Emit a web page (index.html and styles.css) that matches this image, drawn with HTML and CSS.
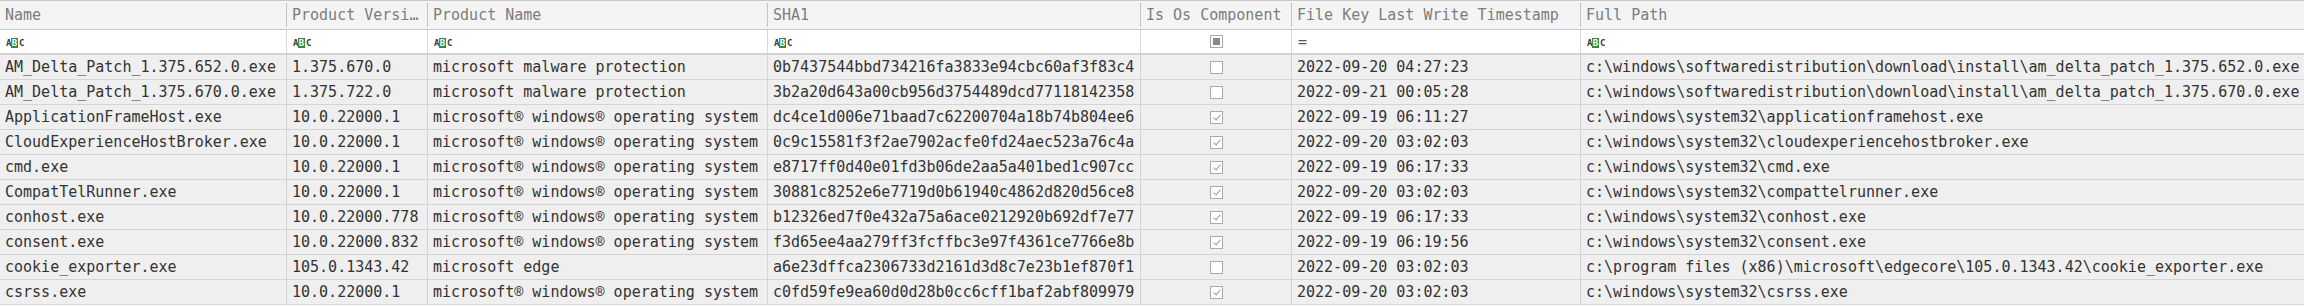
FILE: index.html
```html
<!DOCTYPE html>
<html>
<head>
<meta charset="utf-8">
<link rel="stylesheet" href="styles.css">
</head>
<body>
<div class="grid">
  <div class="row head">
    <div class="cell"><span class="ht">Name</span></div>
    <div class="cell"><span class="ht">Product Versi…</span></div>
    <div class="cell"><span class="ht">Product Name</span></div>
    <div class="cell"><span class="ht">SHA1</span></div>
    <div class="cell"><span class="ht">Is Os Component</span></div>
    <div class="cell"><span class="ht">File Key Last Write Timestamp</span></div>
    <div class="cell last"><span class="ht">Full Path</span></div>
  </div>
  <div class="row filter">
    <div class="cell"><span class="abc"><i>A</i><b>B</b><i>C</i></span></div>
    <div class="cell"><span class="abc"><i>A</i><b>B</b><i>C</i></span></div>
    <div class="cell"><span class="abc"><i>A</i><b>B</b><i>C</i></span></div>
    <div class="cell"><span class="abc"><i>A</i><b>B</b><i>C</i></span></div>
    <div class="cell center"><span class="cb ind"></span></div>
    <div class="cell"><span class="eq">=</span></div>
    <div class="cell last"><span class="abc"><i>A</i><b>B</b><i>C</i></span></div>
  </div>
  <div class="row data">
    <div class="cell">AM_Delta_Patch_1.375.652.0.exe</div>
    <div class="cell">1.375.670.0</div>
    <div class="cell">microsoft malware protection</div>
    <div class="cell">0b7437544bbd734216fa3833e94cbc60af3f83c4</div>
    <div class="cell center"><span class="cb"></span></div>
    <div class="cell">2022-09-20 04:27:23</div>
    <div class="cell last">c:\windows\softwaredistribution\download\install\am_delta_patch_1.375.652.0.exe</div>
  </div>
  <div class="row data">
    <div class="cell">AM_Delta_Patch_1.375.670.0.exe</div>
    <div class="cell">1.375.722.0</div>
    <div class="cell">microsoft malware protection</div>
    <div class="cell">3b2a20d643a00cb956d3754489dcd77118142358</div>
    <div class="cell center"><span class="cb"></span></div>
    <div class="cell">2022-09-21 00:05:28</div>
    <div class="cell last">c:\windows\softwaredistribution\download\install\am_delta_patch_1.375.670.0.exe</div>
  </div>
  <div class="row data">
    <div class="cell">ApplicationFrameHost.exe</div>
    <div class="cell">10.0.22000.1</div>
    <div class="cell">microsoft® windows® operating system</div>
    <div class="cell">dc4ce1d006e71baad7c62200704a18b74b804ee6</div>
    <div class="cell center"><span class="cb on"></span></div>
    <div class="cell">2022-09-19 06:11:27</div>
    <div class="cell last">c:\windows\system32\applicationframehost.exe</div>
  </div>
  <div class="row data">
    <div class="cell">CloudExperienceHostBroker.exe</div>
    <div class="cell">10.0.22000.1</div>
    <div class="cell">microsoft® windows® operating system</div>
    <div class="cell">0c9c15581f3f2ae7902acfe0fd24aec523a76c4a</div>
    <div class="cell center"><span class="cb on"></span></div>
    <div class="cell">2022-09-20 03:02:03</div>
    <div class="cell last">c:\windows\system32\cloudexperiencehostbroker.exe</div>
  </div>
  <div class="row data">
    <div class="cell">cmd.exe</div>
    <div class="cell">10.0.22000.1</div>
    <div class="cell">microsoft® windows® operating system</div>
    <div class="cell">e8717ff0d40e01fd3b06de2aa5a401bed1c907cc</div>
    <div class="cell center"><span class="cb on"></span></div>
    <div class="cell">2022-09-19 06:17:33</div>
    <div class="cell last">c:\windows\system32\cmd.exe</div>
  </div>
  <div class="row data">
    <div class="cell">CompatTelRunner.exe</div>
    <div class="cell">10.0.22000.1</div>
    <div class="cell">microsoft® windows® operating system</div>
    <div class="cell">30881c8252e6e7719d0b61940c4862d820d56ce8</div>
    <div class="cell center"><span class="cb on"></span></div>
    <div class="cell">2022-09-20 03:02:03</div>
    <div class="cell last">c:\windows\system32\compattelrunner.exe</div>
  </div>
  <div class="row data">
    <div class="cell">conhost.exe</div>
    <div class="cell">10.0.22000.778</div>
    <div class="cell">microsoft® windows® operating system</div>
    <div class="cell">b12326ed7f0e432a75a6ace0212920b692df7e77</div>
    <div class="cell center"><span class="cb on"></span></div>
    <div class="cell">2022-09-19 06:17:33</div>
    <div class="cell last">c:\windows\system32\conhost.exe</div>
  </div>
  <div class="row data">
    <div class="cell">consent.exe</div>
    <div class="cell">10.0.22000.832</div>
    <div class="cell">microsoft® windows® operating system</div>
    <div class="cell">f3d65ee4aa279ff3fcffbc3e97f4361ce7766e8b</div>
    <div class="cell center"><span class="cb on"></span></div>
    <div class="cell">2022-09-19 06:19:56</div>
    <div class="cell last">c:\windows\system32\consent.exe</div>
  </div>
  <div class="row data">
    <div class="cell">cookie_exporter.exe</div>
    <div class="cell">105.0.1343.42</div>
    <div class="cell">microsoft edge</div>
    <div class="cell">a6e23dffca2306733d2161d3d8c7e23b1ef870f1</div>
    <div class="cell center"><span class="cb"></span></div>
    <div class="cell">2022-09-20 03:02:03</div>
    <div class="cell last">c:\program files (x86)\microsoft\edgecore\105.0.1343.42\cookie_exporter.exe</div>
  </div>
  <div class="row data">
    <div class="cell">csrss.exe</div>
    <div class="cell">10.0.22000.1</div>
    <div class="cell">microsoft® windows® operating system</div>
    <div class="cell">c0fd59fe9ea60d0d28b0cc6cff1baf2abf809979</div>
    <div class="cell center"><span class="cb on"></span></div>
    <div class="cell">2022-09-20 03:02:03</div>
    <div class="cell last">c:\windows\system32\csrss.exe</div>
  </div>
</div>
</body>
</html>
```

FILE: styles.css
```css
html, body {
  margin: 0;
  padding: 0;
  background: #ffffff;
}
body {
  font-family: "DejaVu Sans Mono", "Liberation Mono", monospace;
  font-size: 15px;
  color: #333333;
}
.grid {
  width: 2304px;
  display: flex;
  flex-direction: column;
}
.row {
  display: grid;
  grid-template-columns: 287px 141px 340px 373px 151px 289px 723px;
}
.cell {
  box-sizing: border-box;
  padding: 0 5px;
  white-space: nowrap;
  overflow: hidden;
  border-right: 1px solid #d4d4d4;
  display: flex;
  align-items: center;
  min-width: 0;
}
.cell.last {
  border-right: none;
}
.cell.center {
  justify-content: center;
}

/* header */
.head {
  background: #f4f4f4;
  border-top: 1px solid #c8c8c8;
  border-bottom: 1px solid #c8c8c8;
  height: 30px;
  box-sizing: border-box;
  align-items: center;
}
.head .cell {
  height: 24px;
  color: #7c7c7c;
  border-right-color: #c4c4c4;
}
.ht {
  white-space: nowrap;
}

/* filter */
.filter {
  background: #ffffff;
  height: 25px;
  box-sizing: border-box;
  border-bottom: 2px solid #d2d2d2;
}
.filter .cell {
  border-right-color: #d8d8d8;
}
.abc {
  display: inline-flex;
  align-items: center;
  height: 10px;
  margin-left: 1px;
  margin-top: 2px;
  font-family: "DejaVu Sans Mono", monospace;
  font-size: 9px;
  font-weight: bold;
  line-height: 10px;
}
.abc i {
  font-style: normal;
  color: #3a3a3a;
  width: 4px;
  text-align: center;
  display: inline-block;
}
.abc b {
  display: inline-block;
  width: 7px;
  height: 10px;
  margin: 0 1px 0 1px;
  background: #2f8d41;
  color: #ffffff;
  text-align: center;
  font-weight: bold;
}
.eq {
  color: #555;
  font-size: 15px;
  margin-left: 1px;
}

/* data */
.data {
  background: #efefef;
  height: 25px;
  box-sizing: border-box;
  border-bottom: 1px solid #d4d4d4;
}
.data .cell {
  line-height: 24px;
}

/* checkboxes */
.cb {
  box-sizing: border-box;
  display: inline-block;
  width: 13px;
  height: 13px;
  border: 1px solid #ababab;
  background: #ffffff;
  position: relative;
}
.cb.ind::after {
  content: "";
  position: absolute;
  left: 2px;
  top: 2px;
  width: 7px;
  height: 7px;
  background: #8a8a8a;
}
.cb.on::after {
  content: "";
  position: absolute;
  left: 4px;
  top: 1px;
  width: 3px;
  height: 6px;
  border-right: 1px solid #9a9a9a;
  border-bottom: 1px solid #9a9a9a;
  transform: rotate(40deg);
}
```
